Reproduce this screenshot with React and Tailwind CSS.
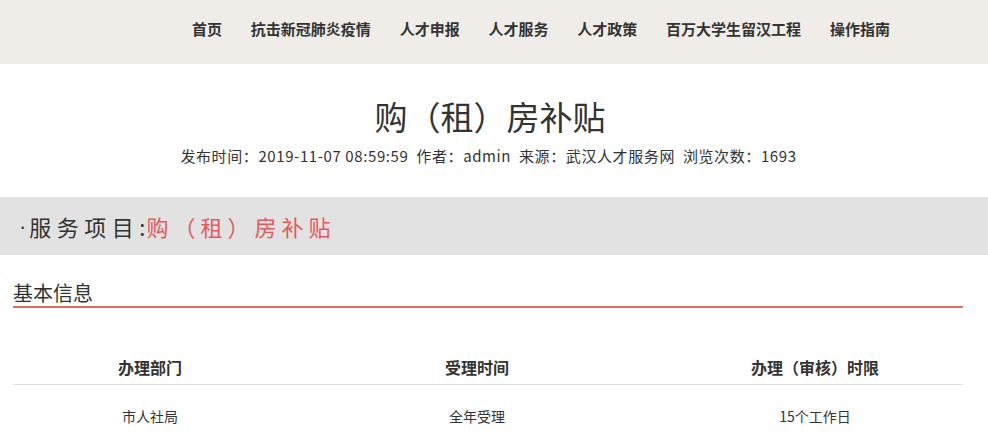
import React from 'react';

const navItems = ['首页', '抗击新冠肺炎疫情', '人才申报', '人才服务', '人才政策', '百万大学生留汉工程', '操作指南'];

const App = () => {
  return (
    <div className="w-[988px] h-[443px] overflow-hidden bg-white text-[#333] font-['Noto_Sans_CJK_SC','Noto_Sans',sans-serif]">
      {/* Top nav */}
      <div className="h-[64px] bg-[#f0ede9] flex items-center pl-[192px]">
        <div className="flex gap-[28.8px] -mt-[8px]">
          {navItems.map(item => (
            <span key={item} className="text-[15px] font-bold text-[#333] leading-none">{item}</span>
          ))}
        </div>
      </div>

      {/* Title */}
      <div className="flex flex-col items-center pt-[30px]">
        <h1 className="text-[33px] leading-[44px] text-[#333] -ml-[8px]">购（租）房补贴</h1>
        <p className="text-[15px] leading-[20px] mt-[8px] tracking-[0.6px] text-[#333] -ml-[11px]">
          发布时间：2019-11-07 08:59:59&nbsp;&nbsp;作者：admin&nbsp;&nbsp;来源：武汉人才服务网&nbsp;&nbsp;浏览次数：1693
        </p>
      </div>

      {/* Service band */}
      <div className="mt-[31px] h-[58px] bg-[#e2e2e2] flex items-center pl-[19px]">
        <span className="text-[22px] text-[#333] font-['Liberation_Sans',sans-serif] mr-[3px]">·</span>
        <span className="text-[22px] tracking-[5.5px] text-[#333]">服务项目</span>
        <span className="text-[22px] text-[#333] mr-[1px]">:</span>
        <span className="text-[22px] tracking-[5px] text-[#e5585c]">购（租）房补贴</span>
      </div>

      {/* Basic info */}
      <div className="px-[13px] w-[976px]">
        <div className="mt-[25px] border-b-2 border-[#e06b6b]">
          <span className="text-[20px] leading-[26px] text-[#333]">基本信息</span>
        </div>

        <div className="mt-[47px] w-[950px]">
          <div className="grid grid-cols-[274px_380px_296px] border-b border-[#dcdcdc] pb-[5px]">
            <div className="text-center text-[16px] font-bold">办理部门</div>
            <div className="text-center text-[16px] font-bold">受理时间</div>
            <div className="text-center text-[16px] font-bold">办理（审核）时限</div>
          </div>
          <div className="grid grid-cols-[274px_380px_296px] pt-[21px]">
            <div className="text-center text-[14px]">市人社局</div>
            <div className="text-center text-[14px]">全年受理</div>
            <div className="text-center text-[14px]">15个工作日</div>
          </div>
        </div>
      </div>
    </div>
  );
};

export default App;
